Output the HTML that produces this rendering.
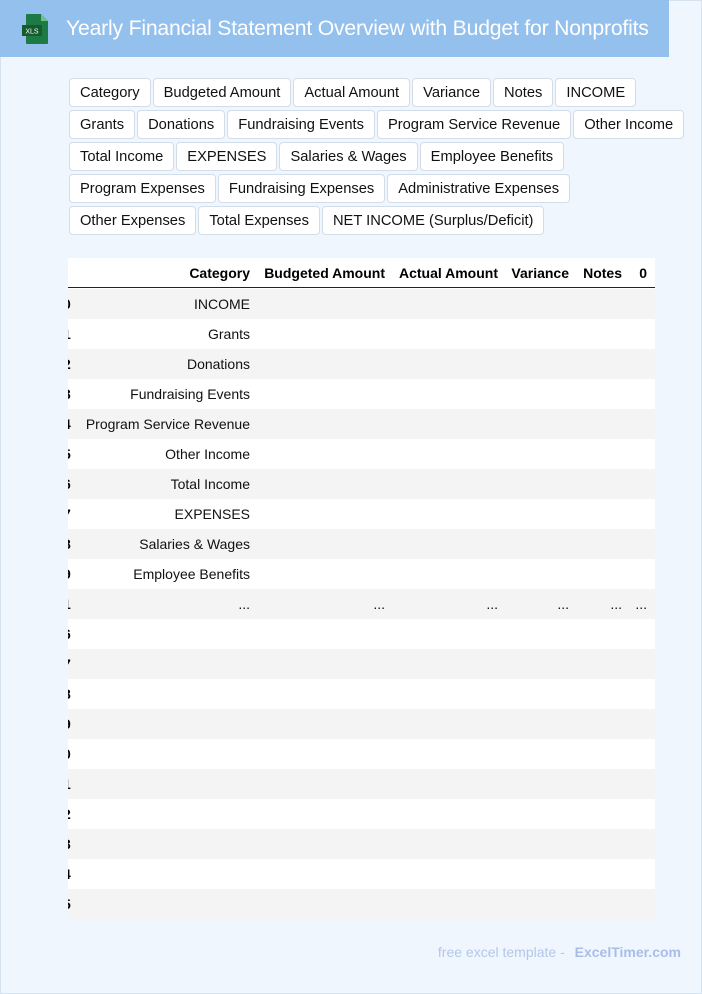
<!DOCTYPE html>
<html><head><meta charset="utf-8"><style>
*{margin:0;padding:0;box-sizing:border-box}
body{width:702px;height:994px;background:#eff6fe;font-family:"Liberation Sans",sans-serif;position:relative;overflow:hidden}
.bd{position:absolute;left:0;top:0;width:702px;height:994px;border:1px solid #d6e2ee}
.hdr{position:absolute;left:0;top:0;width:669px;height:57px;background:#93c0ec}
.hdr h1{position:absolute;left:66px;top:17px;font-size:21.2px;font-weight:normal;color:#fff;white-space:nowrap;letter-spacing:-0.2px}
.row{position:absolute;left:69px;display:flex;gap:2px}
.tag{height:29px;border:1px solid #d3dde8;border-radius:4px;background:#fff;font-size:14.7px;line-height:28px;padding:0 10px;color:#111;white-space:nowrap}
.tbl{position:absolute;left:68px;top:258px;width:587px;height:661px;overflow:hidden;background:#fff}
.r{position:absolute;left:0;width:587px;height:30px}
.g{background:#f4f4f4}
.c{position:absolute;font-size:14px;line-height:30px;text-align:right;white-space:nowrap;color:#111}
.h{font-weight:bold;color:#000}
.foot{position:absolute;right:21px;top:944px;font-size:14px;color:#b3c7ea}
.foot b{color:#a9bde9;margin-left:6px}
</style></head><body>
<div class="bd"></div>
<div class="hdr">
<svg style="position:absolute;left:21px;top:13px" width="30" height="32" viewBox="0 0 30 32"><path d="M6 1h14l7 7v22a1 1 0 0 1-1 1H6a1 1 0 0 1-1-1V2a1 1 0 0 1 1-1z" fill="#1e7a44"/><path d="M20 1v7h7z" fill="#6fbf8c"/><rect x="1" y="12" width="20" height="11" fill="#145c30"/><text x="11" y="20.5" font-size="7" fill="#fff" text-anchor="middle" font-family="Liberation Sans">XLS</text></svg>
<h1>Yearly Financial Statement Overview with Budget for Nonprofits</h1>
</div>
<div class="row" style="top:78px"><span class="tag">Category</span><span class="tag">Budgeted Amount</span><span class="tag">Actual Amount</span><span class="tag">Variance</span><span class="tag">Notes</span><span class="tag">INCOME</span></div>
<div class="row" style="top:110px"><span class="tag">Grants</span><span class="tag">Donations</span><span class="tag">Fundraising Events</span><span class="tag">Program Service Revenue</span><span class="tag">Other Income</span></div>
<div class="row" style="top:142px"><span class="tag">Total Income</span><span class="tag">EXPENSES</span><span class="tag">Salaries &amp; Wages</span><span class="tag">Employee Benefits</span></div>
<div class="row" style="top:174px"><span class="tag">Program Expenses</span><span class="tag">Fundraising Expenses</span><span class="tag">Administrative Expenses</span></div>
<div class="row" style="top:206px"><span class="tag">Other Expenses</span><span class="tag">Total Expenses</span><span class="tag">NET INCOME (Surplus/Deficit)</span></div>
<div class="tbl">
<div class="r" style="top:0;border-bottom:1px solid #222"></div>
<div class="c h" style="right:405px;top:0">Category</div>
<div class="c h" style="right:270px;top:0">Budgeted Amount</div>
<div class="c h" style="right:157px;top:0">Actual Amount</div>
<div class="c h" style="right:86px;top:0">Variance</div>
<div class="c h" style="right:33px;top:0">Notes</div>
<div class="c h" style="right:8px;top:0">0</div>
<div class="r g" style="top:31px"></div><div class="r" style="top:61px"></div><div class="r g" style="top:91px"></div><div class="r" style="top:121px"></div><div class="r g" style="top:151px"></div><div class="r" style="top:181px"></div><div class="r g" style="top:211px"></div><div class="r" style="top:241px"></div><div class="r g" style="top:271px"></div><div class="r" style="top:301px"></div><div class="r g" style="top:331px"></div><div class="r" style="top:361px"></div><div class="r g" style="top:391px"></div><div class="r" style="top:421px"></div><div class="r g" style="top:451px"></div><div class="r" style="top:481px"></div><div class="r g" style="top:511px"></div><div class="r" style="top:541px"></div><div class="r g" style="top:571px"></div><div class="r" style="top:601px"></div><div class="r g" style="top:631px"></div>
<div class="c" style="right:405px;top:31px">INCOME</div>
<div class="c" style="right:405px;top:61px">Grants</div>
<div class="c" style="right:405px;top:91px">Donations</div>
<div class="c" style="right:405px;top:121px">Fundraising Events</div>
<div class="c" style="right:405px;top:151px">Program Service Revenue</div>
<div class="c" style="right:405px;top:181px">Other Income</div>
<div class="c" style="right:405px;top:211px">Total Income</div>
<div class="c" style="right:405px;top:241px">EXPENSES</div>
<div class="c" style="right:405px;top:271px">Salaries &amp; Wages</div>
<div class="c" style="right:405px;top:301px">Employee Benefits</div>
<div class="c" style="right:405px;top:331px">...</div>
<div class="c" style="right:270px;top:331px">...</div>
<div class="c" style="right:157px;top:331px">...</div>
<div class="c" style="right:86px;top:331px">...</div>
<div class="c" style="right:33px;top:331px">...</div>
<div class="c" style="right:8px;top:331px">...</div>
<div class="c h" style="left:-5px;top:31px">0</div><div class="c h" style="left:-5px;top:61px">1</div><div class="c h" style="left:-5px;top:91px">2</div><div class="c h" style="left:-5px;top:121px">3</div><div class="c h" style="left:-5px;top:151px">4</div><div class="c h" style="left:-5px;top:181px">5</div><div class="c h" style="left:-5px;top:211px">6</div><div class="c h" style="left:-5px;top:241px">7</div><div class="c h" style="left:-5px;top:271px">8</div><div class="c h" style="left:-5px;top:301px">9</div><div class="c h" style="left:-5px;top:331px">1</div><div class="c h" style="left:-5px;top:361px">6</div><div class="c h" style="left:-5px;top:391px">7</div><div class="c h" style="left:-5px;top:421px">8</div><div class="c h" style="left:-5px;top:451px">9</div><div class="c h" style="left:-5px;top:481px">0</div><div class="c h" style="left:-5px;top:511px">1</div><div class="c h" style="left:-5px;top:541px">2</div><div class="c h" style="left:-5px;top:571px">3</div><div class="c h" style="left:-5px;top:601px">4</div><div class="c h" style="left:-5px;top:631px">5</div>
</div>
<div class="foot">free excel template - <b>ExcelTimer.com</b></div>
</body></html>
